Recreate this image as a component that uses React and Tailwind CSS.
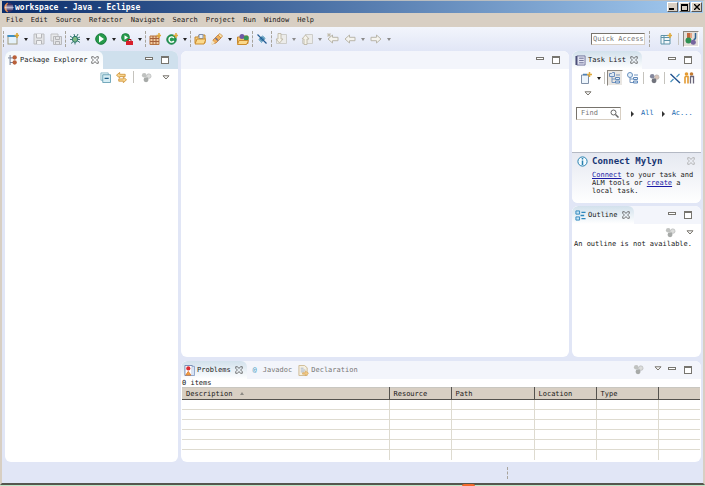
import React from 'react';

function Svg({ children, className = 'size-3' }) {
  return (
    <svg viewBox="0 0 12 12" className={`shrink-0 ${className}`} fill="none" aria-hidden="true">
      {children}
    </svg>
  );
}

const NewWizard = () => (
  <Svg>
    <rect x="1" y="2.500" width="9" height="8.500" fill="#e4f1fa" stroke="#a09a7c" />
    <path d="M.5 3h9" stroke="#3f8fc4" strokeWidth="2" />
    <path d="M10 0v5M7.500 2.500h5" stroke="#d9a431" strokeWidth="1.600" />
  </Svg>
);
const Save = () => (
  <Svg>
    <path d="M1 1h10v10H1z" fill="#e3e4e6" stroke="#bcbdc0" />
    <path d="M3.500 1v4h5V1M3.500 11V7.500h5V11" stroke="#b4b5b8" fill="#f1f2f4" />
  </Svg>
);
const SaveAll = () => (
  <Svg>
    <path d="M1 1h7v7H1z" fill="#e8e9eb" stroke="#c0c1c4" />
    <path d="M3.500 3.500h8v8h-8z" fill="#e3e4e6" stroke="#b8b9bc" />
    <path d="M5.500 4v2.500h4V4M5.500 11V8.500h4V11" stroke="#b4b5b8" />
  </Svg>
);
const Bug = () => (
  <Svg>
    <path d="M1 3l3 2M1 6.500h10M2 10.500l3-2.500M5 1l1 3M9 1L7.500 4M11 4L8 5.500M11 9.500L8 7.500M6 8v3.500" stroke="#3d7d75" />
    <ellipse cx="6" cy="6.300" rx="2.600" ry="3" fill="#7fba83" stroke="#28756d" />
  </Svg>
);
const Run = () => (
  <Svg>
    <circle cx="6" cy="6" r="5.300" fill="#279b4b" stroke="#177a3a" />
    <path d="M4 2.500L9 6 4 9.500z" fill="#fff" />
  </Svg>
);
const RunExternal = () => (
  <Svg>
    <circle cx="4.500" cy="4.500" r="4" fill="#279b4b" stroke="#177a3a" strokeWidth=".7" />
    <path d="M3.500 2.200L7 4.500 3.500 6.800z" fill="#fff" />
    <path d="M5 8h7v4H5z" fill="#d81f2b" />
    <path d="M7 8V6.500h3V8" stroke="#a5121c" />
  </Svg>
);
const NewPackage = () => (
  <Svg>
    <path d="M1 3h9v8.500H1z" fill="#f0c9a0" stroke="#b9743f" />
    <path d="M4 3v8.500M7 3v8.500M1 5.500h9M1 8.500h9" stroke="#a5603a" />
    <path d="M10 0v5M7.500 2.500h5" stroke="#e0a93b" strokeWidth="1.500" />
  </Svg>
);
const NewClass = () => (
  <Svg>
    <circle cx="5.500" cy="6.500" r="4.700" fill="#279b55" stroke="#147c42" />
    <path d="M7.800 5A2.600 2.600 0 1 0 7.800 8" stroke="#fff" strokeWidth="1.400" />
    <path d="M10 0v5M7.500 2.500h5" stroke="#e0a93b" strokeWidth="1.500" />
  </Svg>
);
const OpenType = () => (
  <Svg>
    <path d="M1 10V4h3l1-2h6v8z" fill="#f6ce7a" stroke="#c58a33" />
    <path d="M5 1.500h4v4H5z" fill="#e7effa" stroke="#7f8fae" />
    <path d="M1 11l2-5h9l-2 5z" fill="#fbd98c" stroke="#cc8d2f" />
  </Svg>
);
const Torch = () => (
  <Svg>
    <path d="M1 11l1-4 5-5 3 3-5 5z" fill="#f0b05c" stroke="#bd7b3e" strokeWidth=".8" />
    <path d="M7 2l2-1.500 2.500 2.500L10 5z" fill="#f9dfa6" stroke="#c58a43" strokeWidth=".8" />
    <path d="M0 12l1-5 3 3z" fill="#efe7cf" />
    <path d="M4.500 5l2.500 2.500" stroke="#6c7092" strokeWidth="1.500" />
  </Svg>
);
const SearchFolder = () => (
  <Svg>
    <path d="M0.500 10.500V4H4l1-1h6v7.500z" fill="#f3c368" stroke="#c58a33" />
    <circle cx="5" cy="3.500" r="2.500" fill="#6e58a5" />
    <circle cx="9.200" cy="5" r="2.500" fill="#379458" />
    <path d="M.5 11.500l1.500-4h9.500l-2 4z" fill="#fbd98c" stroke="#cc8d2f" />
  </Svg>
);
const LinkOff = () => (
  <Svg>
    <path d="M3.500 6L6 3.500 8.500 6 6 8.500z" fill="#5ea2c7" stroke="#2b7197" />
    <path d="M1.500 1.500l9 9" stroke="#245c94" strokeWidth="1.200" />
    <path d="M2.500 6.500L6 10M6.500 2.500L9.500 5.500" stroke="#7cb6d3" />
  </Svg>
);
const Annotation = ({ up = false }) => (
  <Svg>
    <path d="M4 1.500h7.500v9H1.500V7" fill="#ececea" stroke="#cdcdca" />
    <path d={up ? 'M4.500 2L1 6h2v5.500h3V6h2z' : 'M4.500 10L1 6h2V.5h3V6h2z'} fill="#f4f2e9" stroke="#bdb8a7" strokeWidth=".9" />
  </Svg>
);
const Arrow = ({ right = false, star = false }) => (
  <Svg>
    <path
      d={right ? 'M11 6L6.500 2v2.300H1v3.400h5.500V10z' : 'M1 6l4.500-4v2.300H11v3.400H5.500V10z'}
      fill="#f4f3ee"
      stroke="#b9b6aa"
    />
    {star && <path d="M2 0v4M0 2h4M.5.5l3 3M3.500.5l-3 3" stroke="#bfb9a6" strokeWidth=".8" />}
  </Svg>
);
const Perspective = () => (
  <Svg>
    <path d="M1 2.500h9v8.500H1z" fill="#f2f8fb" stroke="#5e93a8" />
    <path d="M1 4.500h9M4 3v8M4 7.500h6" stroke="#5e93a8" />
    <path d="M10 0v5M7.500 2.500h5" stroke="#e0a93b" strokeWidth="1.500" />
  </Svg>
);
const JavaPerspective = () => (
  <Svg>
    <path d="M2 0h3v5H2z" fill="#c3683d" />
    <path d="M5 0h2v5H5z" fill="#e3a583" />
    <path d="M10.500 0v4.500q0 2-2 2" stroke="#2c6394" strokeWidth="1.500" />
    <circle cx="3.500" cy="7.500" r="3" fill="#2f9153" />
    <circle cx="8.300" cy="9.300" r="2.500" fill="#77659f" />
  </Svg>
);
const PackageIcon = () => (
  <Svg className="size-[10px]">
    <path d="M2.500 0v12M2.500 3.500h4M2.500 9h4" stroke="#5d6a85" />
    <path d="M0 3.500h2" stroke="#5d6a85" />
    <circle cx="8" cy="3" r="2.600" fill="#b9603a" />
    <circle cx="8" cy="9" r="2.600" fill="#b9603a" />
  </Svg>
);
const TaskIcon = () => (
  <Svg className="size-[11px]">
    <path d="M2 1h9v10H2z" fill="#dfe1ef" stroke="#70739a" />
    <path d="M4.500 3.500h5M4.500 6h5M4.500 8.500h5" stroke="#676a91" />
    <path d="M1.500 1v10" stroke="#4d5079" strokeWidth="2" />
  </Svg>
);
const OutlineIcon = () => (
  <Svg className="size-[11px]">
    <path d="M1 1h4v3.500H1zM1 7.500h4V11H1z" fill="#c5e3f4" stroke="#2d87bd" />
    <path d="M7 2.500h4.500M7 9.500h4.500M6 6h4" stroke="#2d87bd" strokeWidth="1.400" />
  </Svg>
);
const ProblemsIcon = () => (
  <Svg className="size-[11px]">
    <path d="M1 .5h8v11H1z" fill="#fff" stroke="#6b83b0" />
    <path d="M9 1.500h2.500v10H8" fill="#d8e4f5" stroke="#8da2c6" />
    <circle cx="4.700" cy="3.700" r="2.300" fill="#dc2e34" />
    <path d="M2 11l2.700-4 2.700 4z" fill="#f2a43d" stroke="#e07d35" />
  </Svg>
);
const DeclarationIcon = () => (
  <Svg className="size-[11px]">
    <path d="M1 .5h6L10 3v8.500H1z" fill="#f5f0e2" stroke="#ccb88e" />
    <path d="M3 3.500h3M3 5.500h5M3 7.500h4" stroke="#a3b4cc" />
    <path d="M5 8.500h3V6.500L11.500 9 8 12v-2H5z" fill="#f3cd87" stroke="#d6a357" strokeWidth=".7" />
  </Svg>
);
const CollapseAll = () => (
  <Svg className="size-[11px]">
    <path d="M1 1h8v8H1z" fill="#e4f2f6" stroke="#8ab7c6" />
    <path d="M3 3h8.500v8.500H3z" fill="#d6edf4" stroke="#65a0b5" />
    <path d="M5 7h4.500" stroke="#205f87" strokeWidth="1.300" />
  </Svg>
);
const LinkEditor = () => (
  <Svg className="size-[11px]">
    <path d="M.5 3.500L4 .5v2h6v2.500H4v1.500z" fill="#f8d68d" stroke="#ce9137" strokeWidth=".9" />
    <path d="M11.500 8.500L8 5.500v2H3V10h5v1.700z" fill="#f8d68d" stroke="#ce9137" strokeWidth=".9" />
  </Svg>
);
const Focus = ({ active = false }) => (
  <Svg className="size-[11px]">
    <circle cx="3.500" cy="3.500" r="2.500" fill={active ? '#85889d' : '#c0c2c0'} />
    <circle cx="8.500" cy="4.500" r="2.500" fill={active ? '#d9c4b8' : '#dcdddb'} stroke="#adafb0" strokeWidth=".6" />
    <circle cx="5.500" cy="8.500" r="2.700" fill={active ? '#71737c' : '#a7aaa8'} />
  </Svg>
);
const NewTask = () => (
  <Svg>
    <path d="M1.500 3h7v8.500h-7z" fill="#edf5fc" stroke="#8090a8" />
    <path d="M3 2.500h4" stroke="#4f82b5" strokeWidth="1.500" />
    <path d="M9.500 0v5M7 2.500h5" stroke="#e0a93b" strokeWidth="1.500" />
  </Svg>
);
const Tree = ({ clock = false }) => (
  <Svg>
    {clock ? (
      <circle cx="3" cy="3" r="2.500" fill="#e6f1fb" stroke="#6790be" />
    ) : (
      <path d="M.5 1.500h2l1-1h2v4h-5z" fill="#dbe7f3" stroke="#6c8ebc" />
    )}
    <path d="M3 5v5.500h3M3 7h3M7 3h4" stroke="#7595be" />
    <path d="M6.500 5.500h4v2h-4zM6.500 9h4v2h-4z" fill="#e4eefa" stroke="#5f88b9" />
  </Svg>
);
const HideDone = () => (
  <Svg>
    <path d="M1.500 2l9.500 9" stroke="#1e4f8d" strokeWidth="1.400" />
    <path d="M1.500 10l3-3M7.500 5l3-3" stroke="#4c93bd" strokeWidth="1.200" />
  </Svg>
);
const People = () => (
  <Svg>
    <circle cx="3.500" cy="2" r="1.800" fill="#e59b31" />
    <circle cx="8.500" cy="2" r="1.800" fill="#c37b31" />
    <path d="M2 4.500h3v7M2 4.500v7" stroke="#e39a31" strokeWidth="1.600" />
    <path d="M7 4.500h3.500v7M7.500 4.500v7" stroke="#6b667a" strokeWidth="1.300" />
  </Svg>
);
const EclipseLogo = () => (
  <Svg className="size-[11px]">
    <circle cx="6.500" cy="6" r="5" fill="#3d3366" />
    <path d="M5 1.200A5.200 5.200 0 0 0 5 10.800 7 7 0 0 1 5 1.200z" fill="#e58b4a" stroke="#e58b4a" />
    <path d="M2.500 4.500h8.500M2 6h9.500M2.500 7.500h8.500" stroke="#f0f0fa" strokeWidth=".8" />
  </Svg>
);
const CloseX = ({ className = 'text-[#555]' }) => (
  <svg viewBox="0 0 9 9" className={`size-2 shrink-0 ${className}`} fill="none" stroke="currentColor" strokeWidth=".9" aria-hidden="true">
    <path d="M.8.8h2l1.700 2 1.700-2h2v1.800L6.300 4.500l1.900 1.900v1.800h-2l-1.700-2-1.700 2h-2V6.400l1.900-1.900L.8 2.600z" />
  </svg>
);
const Chevron = () => (
  <svg viewBox="0 0 8 5" className="h-[5px] w-2 shrink-0" fill="#fff" stroke="#77736c" aria-hidden="true">
    <path d="M1 .8h6L4 4z" />
  </svg>
);

const IconButton = ({ label, children, className = 'size-4' }) => (
  <button type="button" aria-label={label} className={`flex shrink-0 items-center justify-center ${className}`}>
    {children}
  </button>
);
const Drop = ({ label, dim = false }) => (
  <IconButton label={label} className="h-4 w-[9px]">
    <span className={`border-x-2 border-t-[3px] border-x-transparent ${dim ? 'border-t-[#8b8b8b]' : 'border-t-[#222]'}`} />
  </IconButton>
);
const Grip = () => <span className="h-4 w-px shrink-0 border-l border-dashed border-[#a8a49c]" />;
const Line = () => <span className="h-3 w-px shrink-0 bg-[#c5c3bd]" />;

const tools = [
  [null],
  ['New', NewWizard, {}, true],
  ['Save', Save],
  ['Save All', SaveAll],
  [null],
  ['Debug', Bug, {}, true],
  ['Run', Run, {}, true],
  ['External Tools', RunExternal, {}, true],
  [null],
  ['New Java Package', NewPackage],
  ['New Java Class', NewClass, {}, true],
  [null],
  ['Open Type', OpenType],
  ['Search', Torch, {}, true],
  ['Open Task', SearchFolder],
  [null],
  ['Toggle Link', LinkOff],
  [null],
  ['Next Annotation', Annotation, {}, true, true],
  ['Previous Annotation', Annotation, { up: true }, true, true],
  ['Last Edit Location', Arrow, { star: true }],
  ['Back', Arrow, {}, true, true],
  ['Forward', Arrow, { right: true }, true, true],
];

const WindowButtons = () => (
  <div className="flex h-full items-start gap-2 pr-[9px] pt-[5px]">
    <button type="button" aria-label="Minimize" className="mt-px h-[3px] w-2 border border-[#77756f] bg-white" />
    <button type="button" aria-label="Maximize" className="h-2 w-2 border border-t-2 border-[#77756f] bg-white" />
  </div>
);

function Tab({ icon, title, className = '' }) {
  return (
    <div role="tab" aria-selected="true" className={`flex h-full shrink-0 items-center gap-[2px] rounded-t-md pl-[3px] pr-1 ${className}`}>
      {icon}
      <span className="whitespace-nowrap pr-[2px]">{title}</span>
      <button type="button" aria-label={`Close ${title}`}><CloseX /></button>
    </div>
  );
}

function Panel({ head, headClass = 'bg-[#f3f5fb]', className = '', children }) {
  return (
    <section className={`flex min-h-0 flex-col overflow-hidden rounded-md bg-white ${className}`}>
      <header className={`flex h-[18px] shrink-0 items-center justify-between ${headClass}`}>{head}</header>
      {children}
    </section>
  );
}

const activeTab = 'bg-linear-to-b from-[#d2e1ec] to-white';
const columns = [
  ['Description', 'w-[207px]'],
  ['Resource', 'w-[62px]'],
  ['Path', 'w-[83px]'],
  ['Location', 'w-[62px]'],
  ['Type', 'w-[62px]'],
  ['', ''],
];

function ProblemsTable() {
  return (
    <table className="w-full table-fixed border-collapse">
      <thead>
        <tr className="h-3 border-t border-b border-t-[#c9c7c0] border-b-[#55524d] bg-[#d8cfc3]">
          {columns.map(([name, width]) => (
            <th key={name} scope="col" className={`border-r border-[#55524d] p-0 pl-1 text-left font-normal leading-[10px] last:border-r-0 ${width}`}>
              <span className="flex items-center gap-2">
                {name}
                {name === 'Description' && <span className="border-x-2 border-b-[3px] border-x-transparent border-b-[#8d8a84]" />}
              </span>
            </th>
          ))}
        </tr>
      </thead>
      <tbody>
        {[0, 1, 2, 3, 4, 5].map((row) => (
          <tr key={row} className="h-[10px] border-b border-[#dedbd0] last:border-b-0">
            {columns.map(([name]) => (
              <td key={name} className="border-r border-[#dedbd0] p-0 last:border-r-0" />
            ))}
          </tr>
        ))}
      </tbody>
    </table>
  );
}

export default function App() {
  return (
    <div className="relative flex h-screen flex-col overflow-hidden bg-[#bfe8c8] font-['DejaVu_Sans_Mono','Liberation_Mono',monospace] text-[7px] leading-[9px] text-[#181818]">
      <div className="flex min-h-0 flex-1 flex-col border-t border-r-2 border-b-2 border-l-2 border-t-[#b9bdc0] border-r-[#d8cfc3] border-b-[#55564e] border-l-[#d8cfc3] bg-[#e1e6f6]">
        <div className="flex h-3 shrink-0 items-center bg-linear-to-r from-[#0b2d6b] to-[#a4cbf0] pl-px pr-px text-white">
          <EclipseLogo />
          <h1 className="ml-px flex-1 text-[8px] font-bold">workspace - Java - Eclipse</h1>
          <div className="flex gap-px text-black">
            <button type="button" aria-label="Minimize window" className="flex h-[10px] w-[11px] items-end border border-t-white border-l-white border-r-[#555] border-b-[#555] bg-[#d8cfc3] p-px">
              <span className="h-[2px] w-[5px] bg-black" />
            </button>
            <button type="button" aria-label="Maximize window" className="flex h-[10px] w-[11px] items-center justify-center border border-t-white border-l-white border-r-[#555] border-b-[#555] bg-[#d8cfc3]">
              <span className="h-[7px] w-[7px] border border-t-2 border-black" />
            </button>
            <button type="button" aria-label="Close window" className="flex h-[10px] w-[11px] items-center justify-center border border-t-white border-l-white border-r-[#555] border-b-[#555] bg-[#d8cfc3]">
              <svg viewBox="0 0 6 6" className="size-[6px]" stroke="#000" strokeWidth="1.400" aria-hidden="true"><path d="M0 0l6 6M6 0L0 6" /></svg>
            </button>
          </div>
        </div>

        <nav className="flex h-[14px] shrink-0 items-center gap-2 bg-[#d8cfc3] pl-1">
          {['File', 'Edit', 'Source', 'Refactor', 'Navigate', 'Search', 'Project', 'Run', 'Window', 'Help'].map((m) => (
            <button key={m} type="button">{m}</button>
          ))}
        </nav>

        <div className="flex h-6 shrink-0 items-center justify-between bg-linear-to-b from-[#f2f5fc] to-[#e1e6f6]">
          <div className="flex items-center gap-px pl-px">
            {tools.map(([label, Icon, props, drop, dim], i) =>
              label ? (
                <div key={label} className="flex">
                  <IconButton label={label}><Icon {...props} /></IconButton>
                  {drop && <Drop label={`${label} menu`} dim={dim} />}
                </div>
              ) : (
                <Grip key={i} />
              ),
            )}
          </div>
          <div className="flex items-center gap-1 pr-1">
            <input aria-label="Quick Access" placeholder="Quick Access" className="h-3 w-[54px] border border-t-[#77736c] border-r-[#d8cfc3] border-b-[#d8cfc3] border-l-[#77736c] bg-white pl-px placeholder:text-[#777]" />
            <Grip />
            <IconButton label="Open Perspective" className="ml-1 size-4"><Perspective /></IconButton>
            <Line />
            <IconButton label="Java" className="size-4 border border-t-[#8b8780] border-r-white border-b-white border-l-[#8b8780] bg-[#e4dfda]"><JavaPerspective /></IconButton>
          </div>
        </div>

        <main className="flex min-h-0 flex-1 gap-[3px] pl-[3px] pr-[2px]">
          <Panel
            className="w-[173px] shrink-0"
            headClass="bg-[#cfe0ed]"
            head={<><Tab icon={<PackageIcon />} title="Package Explorer" className="bg-linear-to-b from-[#f4f8fb] to-white" /><WindowButtons /></>}
          >
            <div className="flex h-4 items-center justify-end pr-1">
              <IconButton label="Collapse All"><CollapseAll /></IconButton>
              <IconButton label="Link with Editor"><LinkEditor /></IconButton>
              <span className="mx-1 flex"><Line /></span>
              <IconButton label="Focus"><Focus /></IconButton>
              <IconButton label="View Menu" className="ml-1 size-4"><Chevron /></IconButton>
            </div>
          </Panel>

          <div className="flex min-w-0 flex-1 flex-col gap-1">
            <div className="flex min-h-0 flex-1 gap-[3px]">
              <Panel className="min-w-0 flex-1" head={<><span /><WindowButtons /></>} />

              <div className="flex w-[129px] shrink-0 flex-col gap-[3px]">
                <Panel
                  className="h-[152px]"
                  head={<><Tab icon={<TaskIcon />} title="Task List" className={activeTab} /><WindowButtons /></>}
                >
                  <div className="flex h-[18px] shrink-0 items-center pl-[6px]">
                    <IconButton label="New Task"><NewTask /></IconButton>
                    <Drop label="New Task menu" />
                    <span className="ml-px flex"><Line /></span>
                    <IconButton label="Categorized" className="mx-[2px] size-4 border border-t-[#8b8780] border-r-white border-b-white border-l-[#8b8780] bg-[#e9e6e2]"><Tree /></IconButton>
                    <IconButton label="Scheduled"><Tree clock /></IconButton>
                    <span className="mx-[2px] flex"><Line /></span>
                    <IconButton label="Focus on Workweek"><Focus active /></IconButton>
                    <span className="mx-[2px] flex"><Line /></span>
                    <IconButton label="Hide Completed"><HideDone /></IconButton>
                    <IconButton label="Show Tasks UI Legend" className="h-4 w-3"><People /></IconButton>
                  </div>
                  <div className="flex h-3 shrink-0 items-center pl-3">
                    <button type="button" aria-label="View Menu"><Chevron /></button>
                  </div>
                  <div className="mt-2 flex shrink-0 items-center pl-1">
                    <label className="flex h-[13px] w-[45px] items-center border border-t-[#77736c] border-r-[#d8cfc3] border-b-[#d8cfc3] border-l-[#77736c] pr-px">
                      <input aria-label="Find" placeholder="Find" className="w-0 flex-1 pl-1 placeholder:text-[#777]" />
                      <svg viewBox="0 0 9 9" className="size-[9px]" fill="none" stroke="#666" aria-hidden="true"><circle cx="3.500" cy="3.500" r="2.500" /><path d="M5.500 5.500l3 3" strokeWidth="1.500" /></svg>
                    </label>
                    <span className="ml-[10px] border-y-[3px] border-l-[3px] border-y-transparent border-l-[#333]" />
                    <a href="#all" className="ml-[7px] text-[#1668b0]">All</a>
                    <span className="ml-2 border-y-[3px] border-l-[3px] border-y-transparent border-l-[#333]" />
                    <a href="#activate" className="ml-[7px] text-[#1668b0]">Ac...</a>
                  </div>
                  <div className="mt-auto flex h-[51px] shrink-0 items-start border-t border-[#b4b9c4] bg-linear-to-b from-[#e6e9f1] to-white pl-[5px] pr-[6px] pt-[2px]">
                    <svg viewBox="0 0 11 11" className="mt-px size-[11px] shrink-0" fill="none" stroke="#267fae" aria-hidden="true"><circle cx="5.500" cy="5.500" r="4.600" fill="#f3fbff" /><path d="M5.500 2v1.500M5.500 4.500V9" strokeWidth="1.500" /></svg>
                    <div className="ml-1 min-w-0 flex-1">
                      <div className="flex items-center justify-between">
                        <h2 className="whitespace-nowrap text-[9px] font-bold leading-3 text-[#173572]">Connect Mylyn</h2>
                        <button type="button" aria-label="Close Connect Mylyn"><CloseX className="text-[#aaa]" /></button>
                      </div>
                      <p className="mt-1 whitespace-nowrap leading-[8px]">
                        <a href="#connect" className="text-[#1b1ba5] underline">Connect</a> to your task and<br />
                        ALM tools or <a href="#create" className="text-[#1b1ba5] underline">create</a> a<br />
                        local task.
                      </p>
                    </div>
                  </div>
                </Panel>

                <Panel
                  className="flex-1"
                  head={<><Tab icon={<OutlineIcon />} title="Outline" className={activeTab} /><WindowButtons /></>}
                >
                  <div className="flex h-4 items-center justify-end gap-1 pr-[3px]">
                    <IconButton label="Focus"><Focus /></IconButton>
                    <IconButton label="View Menu"><Chevron /></IconButton>
                  </div>
                  <p className="whitespace-nowrap pl-[2px]">An outline is not available.</p>
                </Panel>
              </div>
            </div>

            <Panel
              className="h-[101px] shrink-0"
              head={
                <>
                  <div role="tablist" className="flex h-full items-center">
                    <Tab icon={<ProblemsIcon />} title="Problems" className={activeTab} />
                    <button type="button" role="tab" className="ml-1 flex items-center gap-1 text-[#777]"><span className="w-2 text-[#4a9cc4]">@</span>Javadoc</button>
                    <button type="button" role="tab" className="ml-[6px] flex items-center gap-[2px] text-[#777]"><DeclarationIcon />Declaration</button>
                  </div>
                  <div className="flex h-full items-start">
                    <IconButton label="Focus"><Focus /></IconButton>
                    <IconButton label="View Menu" className="ml-1 mr-[2px] h-[14px] w-4"><Chevron /></IconButton>
                    <WindowButtons />
                  </div>
                </>
              }
            >
              <p className="pl-px leading-[8px]">0 items</p>
              <div className="min-h-0 flex-1 overflow-hidden px-px">
                <ProblemsTable />
              </div>
            </Panel>
          </div>
        </main>

        <footer className="flex h-[21px] shrink-0 items-center justify-end pr-[195px]">
          <span className="h-3 border-l border-dashed border-[#a8a49c]" />
        </footer>
      </div>
      <div className="h-px shrink-0" />
      <span className="absolute bottom-0 left-[462px] h-[2px] w-[13px] rounded-t-full bg-[#f26a2c]" />
    </div>
  );
}
